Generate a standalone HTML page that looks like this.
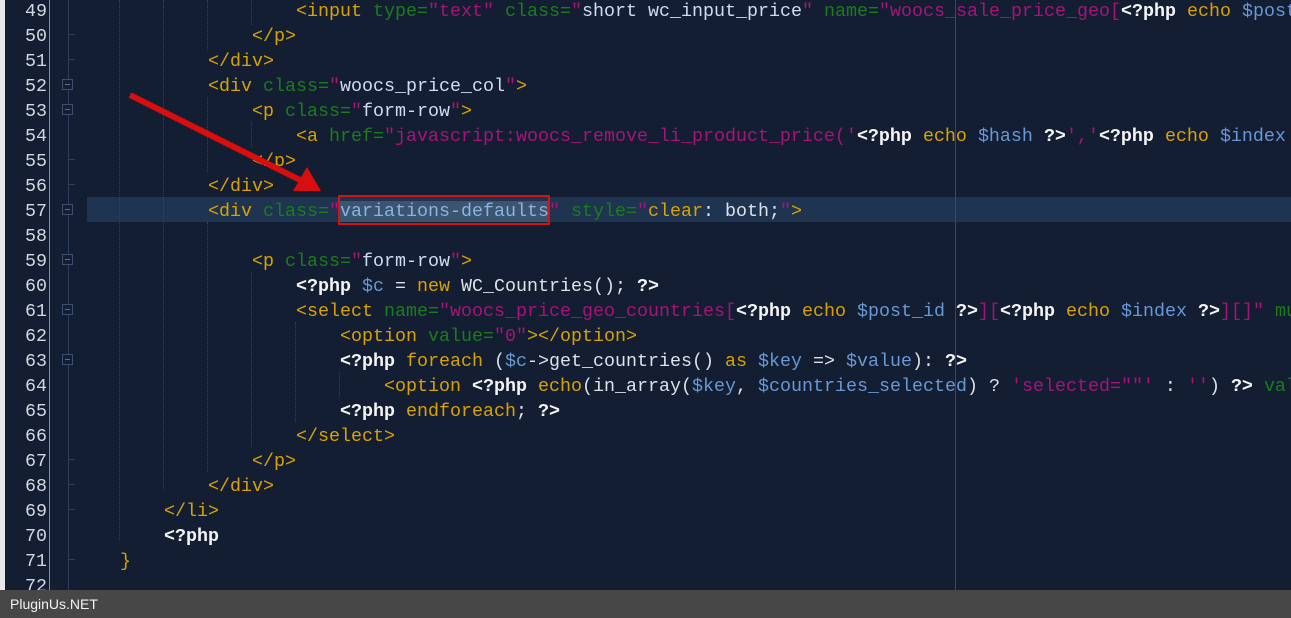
<!DOCTYPE html>
<html><head><meta charset="utf-8"><style>
html,body{margin:0;padding:0;width:1291px;height:618px;overflow:hidden;background:#131e33;}
#ed{position:absolute;left:0;top:0;width:1291px;height:590px;background:#131e33;overflow:hidden;}
.strip{position:absolute;left:0;top:0;width:5px;height:590px;background:#e8e8e8;}
.sep{position:absolute;left:49px;top:0;width:1px;height:590px;background:#8a8f98;}
.fold{position:absolute;left:68px;top:0;width:1px;height:590px;background:#2b3f5c;}
.vline{position:absolute;left:955px;top:0;width:1px;height:590px;background:#3a4a62;}
.hl{position:absolute;left:87px;top:197px;width:1204px;height:25px;background:#1e3450;}
.ln{position:absolute;left:5px;width:42px;text-align:right;font:18.33px "Liberation Mono",monospace;color:#d4d8e0;line-height:25px;}
.tick{position:absolute;left:69px;width:6px;height:1px;background:#2b3f5c;}
.box{position:absolute;left:62px;width:11px;height:11px;border:1px solid #3a506e;background:#131e33;box-sizing:border-box;}
.box:after{content:"";position:absolute;left:2px;top:4px;width:5px;height:1px;background:#5a7090;}
.code{position:absolute;left:76px;white-space:pre;font:18.33px "Liberation Mono",monospace;line-height:25px;color:#dde1e8;}
.g{position:absolute;width:0;border-left:1px dotted #2f4260;}
.t{color:#d9a200}.a{color:#1a7d1a}.q{color:#a8137a}.v{color:#cfdcf0}.p{color:#f4f4f4;font-weight:bold}.k{color:#d9a200}.d{color:#6699d6}.w{color:#dde1e8}
.sel{background:#3a5570;color:#8fb0e0}
#status{position:absolute;left:0;top:590px;width:1291px;height:28px;background:#474747;color:#f2f2f2;font:14px "Liberation Sans",sans-serif;line-height:28px;padding-left:10px;box-sizing:border-box;}
</style></head><body>
<div id="ed">
<div class="strip"></div><div class="sep"></div><div class="fold"></div>
<div class="hl"></div>
<div class="vline"></div>
<div class="g" style="left:119px;top:0;height:540px"></div>
<div class="g" style="left:163px;top:0;height:490px"></div>
<div class="g" style="left:207px;top:0;height:50px"></div>
<div class="g" style="left:251px;top:0;height:25px"></div>
<div class="g" style="left:207px;top:97px;height:75px"></div>
<div class="g" style="left:251px;top:122px;height:25px"></div>
<div class="g" style="left:207px;top:222px;height:250px"></div>
<div class="g" style="left:251px;top:272px;height:175px"></div>
<div class="g" style="left:295px;top:322px;height:100px"></div>
<div class="g" style="left:339px;top:372px;height:25px"></div>

<div class="ln" style="top:-1px">49</div><div class="ln" style="top:24px">50</div><div class="ln" style="top:49px">51</div><div class="ln" style="top:74px">52</div><div class="ln" style="top:99px">53</div><div class="ln" style="top:124px">54</div><div class="ln" style="top:149px">55</div><div class="ln" style="top:174px">56</div><div class="ln" style="top:199px">57</div><div class="ln" style="top:224px">58</div><div class="ln" style="top:249px">59</div><div class="ln" style="top:274px">60</div><div class="ln" style="top:299px">61</div><div class="ln" style="top:324px">62</div><div class="ln" style="top:349px">63</div><div class="ln" style="top:374px">64</div><div class="ln" style="top:399px">65</div><div class="ln" style="top:424px">66</div><div class="ln" style="top:449px">67</div><div class="ln" style="top:474px">68</div><div class="ln" style="top:499px">69</div><div class="ln" style="top:524px">70</div><div class="ln" style="top:549px">71</div><div class="ln" style="top:574px">72</div>

<div class="tick" style="top:34px"></div><div class="tick" style="top:59px"></div><div class="tick" style="top:159px"></div><div class="tick" style="top:184px"></div><div class="tick" style="top:459px"></div><div class="tick" style="top:484px"></div><div class="tick" style="top:509px"></div><div class="tick" style="top:559px"></div>
<div class="box" style="top:79px"></div><div class="box" style="top:104px"></div><div class="box" style="top:204px"></div><div class="box" style="top:254px"></div><div class="box" style="top:304px"></div><div class="box" style="top:354px"></div>

<div class="code" style="top:-1px">                    <span class="t">&lt;input</span> <span class="a">type=</span><span class="q">"text"</span> <span class="a">class=</span><span class="q">"</span><span class="v">short wc_input_price</span><span class="q">"</span> <span class="a">name=</span><span class="q">"woocs_sale_price_geo[</span><span class="p">&lt;?php</span> <span class="k">echo</span> <span class="d">$post_id</span></div>
<div class="code" style="top:24px">                <span class="t">&lt;/p&gt;</span></div>
<div class="code" style="top:49px">            <span class="t">&lt;/div&gt;</span></div>
<div class="code" style="top:74px">            <span class="t">&lt;div</span> <span class="a">class=</span><span class="q">"</span><span class="v">woocs_price_col</span><span class="q">"</span><span class="t">&gt;</span></div>
<div class="code" style="top:99px">                <span class="t">&lt;p</span> <span class="a">class=</span><span class="q">"</span><span class="v">form-row</span><span class="q">"</span><span class="t">&gt;</span></div>
<div class="code" style="top:124px">                    <span class="t">&lt;a</span> <span class="a">href=</span><span class="q">"javascript:woocs_remove_li_product_price('</span><span class="p">&lt;?php</span> <span class="k">echo</span> <span class="d">$hash</span> <span class="p">?&gt;</span><span class="q">','</span><span class="p">&lt;?php</span> <span class="k">echo</span> <span class="d">$index</span> <span class="p">?&gt;</span></div>
<div class="code" style="top:149px">                <span class="t">&lt;/p&gt;</span></div>
<div class="code" style="top:174px">            <span class="t">&lt;/div&gt;</span></div>
<div class="code" style="top:199px">            <span class="t">&lt;div</span> <span class="a">class=</span><span class="q">"</span><span class="sel">variations-defaults</span><span class="q">"</span> <span class="a">style=</span><span class="q">"</span><span class="k">clear</span><span class="w">: both;</span><span class="q">"</span><span class="t">&gt;</span></div>
<div class="code" style="top:249px">                <span class="t">&lt;p</span> <span class="a">class=</span><span class="q">"</span><span class="v">form-row</span><span class="q">"</span><span class="t">&gt;</span></div>
<div class="code" style="top:274px">                    <span class="p">&lt;?php</span> <span class="d">$c</span> = <span class="k">new</span> WC_Countries(); <span class="p">?&gt;</span></div>
<div class="code" style="top:299px">                    <span class="t">&lt;select</span> <span class="a">name=</span><span class="q">"woocs_price_geo_countries[</span><span class="p">&lt;?php</span> <span class="k">echo</span> <span class="d">$post_id</span> <span class="p">?&gt;</span><span class="q">][</span><span class="p">&lt;?php</span> <span class="k">echo</span> <span class="d">$index</span> <span class="p">?&gt;</span><span class="q">][]"</span> <span class="a">multiple</span></div>
<div class="code" style="top:324px">                        <span class="t">&lt;option</span> <span class="a">value=</span><span class="q">"0"</span><span class="t">&gt;&lt;/option&gt;</span></div>
<div class="code" style="top:349px">                        <span class="p">&lt;?php</span> <span class="k">foreach</span> (<span class="d">$c</span>-&gt;get_countries() <span class="k">as</span> <span class="d">$key</span> =&gt; <span class="d">$value</span>): <span class="p">?&gt;</span></div>
<div class="code" style="top:374px">                            <span class="t">&lt;option</span> <span class="p">&lt;?php</span> <span class="k">echo</span>(in_array(<span class="d">$key</span>, <span class="d">$countries_selected</span>) ? <span class="q">'selected=""'</span> : <span class="q">''</span>) <span class="p">?&gt;</span> <span class="a">value</span></div>
<div class="code" style="top:399px">                        <span class="p">&lt;?php</span> <span class="k">endforeach</span>; <span class="p">?&gt;</span></div>
<div class="code" style="top:424px">                    <span class="t">&lt;/select&gt;</span></div>
<div class="code" style="top:449px">                <span class="t">&lt;/p&gt;</span></div>
<div class="code" style="top:474px">            <span class="t">&lt;/div&gt;</span></div>
<div class="code" style="top:499px">        <span class="t">&lt;/li&gt;</span></div>
<div class="code" style="top:524px">        <span class="p">&lt;?php</span></div>
<div class="code" style="top:549px">    <span class="k">}</span></div>

<div style="position:absolute;left:338px;top:195px;width:212px;height:30px;border:2px solid #d41414;box-sizing:border-box;"></div>
<svg style="position:absolute;left:0;top:0" width="1291" height="590">
<line x1="130" y1="95" x2="300" y2="180" stroke="#d80f0f" stroke-width="6"/>
<polygon points="321,191 293,191 307,167" fill="#d80f0f"/>
</svg>
</div>
<div id="status">PluginUs.NET</div>
</body></html>
